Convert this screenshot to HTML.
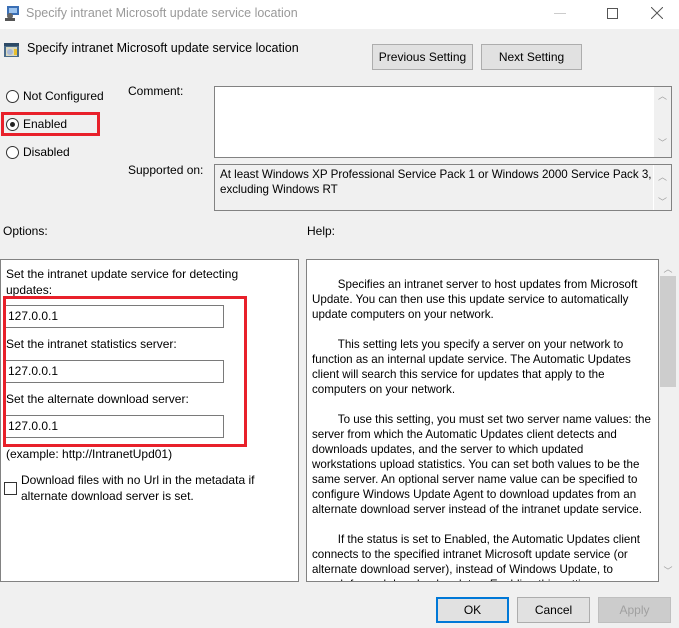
<!DOCTYPE html>
<html><head><style>
*{margin:0;padding:0;box-sizing:border-box}
body{width:679px;height:628px;background:#f0f0f0;font-family:"Liberation Sans",sans-serif;font-size:12px;color:#000;position:relative;overflow:hidden}
.a{position:absolute;white-space:nowrap}
.btn{position:absolute;background:#e1e1e1;border:1px solid #adadad;text-align:center;line-height:24px;font-size:12px}
.rad{position:absolute;width:13px;height:13px;border:1px solid #333;border-radius:50%;background:#fff}
.inp{position:absolute;background:#fff;border:1px solid #7a7a7a;height:23px;line-height:21px;padding-left:2px}
.sb{position:absolute;background:#f0f0f0;color:#a0a0a0;font-size:9px;text-align:center}
.help div{height:15px;line-height:15px;white-space:nowrap}
</style></head><body>
<div class="a" style="left:0;top:0;width:679px;height:29px;background:#fff"></div>
<svg class="a" style="left:4px;top:5px" width="17" height="17"><rect x="3" y="1" width="12" height="9" fill="#3b6fb5"/><rect x="5" y="3" width="8" height="5" fill="#9cc3ee"/><circle cx="6" cy="11" r="3" fill="#666"/><rect x="1" y="13" width="10" height="3" fill="#555"/></svg>
<div class="a" style="left:26px;top:6px;color:#999;font-size:12.5px">Specify intranet Microsoft update service location</div>
<div class="a" style="left:554px;top:13px;width:12px;height:1px;background:#ccc"></div>
<div class="a" style="left:607px;top:8px;width:11px;height:11px;border:1px solid #555"></div>
<svg class="a" style="left:651px;top:7px" width="12" height="12"><path d="M0 0L12 12M12 0L0 12" stroke="#555" stroke-width="1"/></svg>
<svg class="a" style="left:3px;top:41px" width="17" height="17"><rect x="1" y="2" width="15" height="14" fill="#4a6b8a"/><rect x="1" y="2" width="15" height="3" fill="#2d4a66"/><rect x="3" y="6" width="11" height="9" fill="#d8d8c0"/><circle cx="7" cy="11" r="3" fill="#a8b8d8"/><rect x="11" y="8" width="3" height="6" fill="#e8c030"/></svg>
<div class="a" style="left:27px;top:41px;font-size:12.5px">Specify intranet Microsoft update service location</div>
<div class="btn" style="left:372px;top:44px;width:101px;height:26px">Previous Setting</div>
<div class="btn" style="left:481px;top:44px;width:101px;height:26px">Next Setting</div>
<div class="rad" style="left:6px;top:90px"></div><div class="a" style="left:23px;top:89px">Not Configured</div>
<div class="rad" style="left:6px;top:118px"></div><div class="a" style="left:10px;top:122px;width:5px;height:5px;border-radius:50%;background:#222"></div><div class="a" style="left:23px;top:117px">Enabled</div>
<div class="rad" style="left:6px;top:146px"></div><div class="a" style="left:23px;top:145px">Disabled</div>
<div class="a" style="left:1px;top:112px;width:99px;height:24px;border:3px solid #e8202a"></div>
<div class="a" style="left:128px;top:84px">Comment:</div>
<div class="a" style="left:214px;top:86px;width:458px;height:72px;background:#fff;border:1px solid #828282"></div>
<div class="sb" style="left:654px;top:87px;width:17px;height:70px"><div style="margin-top:2px">︿</div><div style="margin-top:34px">﹀</div></div>
<div class="a" style="left:128px;top:163px">Supported on:</div>
<div class="a" style="left:214px;top:164px;width:458px;height:47px;border:1px solid #828282"></div>
<div class="a" style="left:220px;top:167px;line-height:15px;font-size:11.6px">At least Windows XP Professional Service Pack 1 or Windows 2000 Service Pack 3,<br>excluding Windows RT</div>
<div class="sb" style="left:653px;top:165px;width:18px;height:45px;border-left:1px solid #fff"><div style="margin-top:5px">︿</div><div style="margin-top:12px">﹀</div></div>
<div class="a" style="left:3px;top:224px">Options:</div>
<div class="a" style="left:307px;top:224px">Help:</div>
<div class="a" style="left:0;top:259px;width:299px;height:323px;background:#fff;border:1px solid #828282"></div>
<div class="a" style="left:6px;top:266px;line-height:16px">Set the intranet update service for detecting<br>updates:</div>
<div class="inp" style="left:5px;top:305px;width:219px">127.0.0.1</div>
<div class="a" style="left:6px;top:337px">Set the intranet statistics server:</div>
<div class="inp" style="left:5px;top:360px;width:219px">127.0.0.1</div>
<div class="a" style="left:6px;top:392px">Set the alternate download server:</div>
<div class="inp" style="left:5px;top:415px;width:219px">127.0.0.1</div>
<div class="a" style="left:3px;top:296px;width:244px;height:151px;border:3px solid #e8202a"></div>
<div class="a" style="left:6px;top:447px">(example: http://IntranetUpd01)</div>
<div class="a" style="left:4px;top:482px;width:13px;height:13px;border:1px solid #333;background:#fff"></div>
<div class="a" style="left:21px;top:472px;line-height:16px">Download files with no Url in the metadata if<br>alternate download server is set.</div>
<div class="a" style="left:306px;top:259px;width:353px;height:323px;background:#fff;border:1px solid #828282"></div>
<div class="sb" style="left:659px;top:259px;width:18px;height:323px"><div style="margin-top:3px">︿</div><div style="position:absolute;left:1px;top:17px;width:16px;height:111px;background:#cdcdcd"></div><div style="position:absolute;top:305px;width:18px">﹀</div></div>
<div class="a help" style="left:312px;top:277px;width:345px;height:304px;overflow:hidden;font-size:11.6px">
<div>&nbsp;&nbsp;&nbsp;&nbsp;&nbsp;&nbsp;&nbsp;&nbsp;Specifies an intranet server to host updates from Microsoft</div>
<div>Update. You can then use this update service to automatically</div>
<div>update computers on your network.</div><div></div>
<div>&nbsp;&nbsp;&nbsp;&nbsp;&nbsp;&nbsp;&nbsp;&nbsp;This setting lets you specify a server on your network to</div>
<div>function as an internal update service. The Automatic Updates</div>
<div>client will search this service for updates that apply to the</div>
<div>computers on your network.</div><div></div>
<div>&nbsp;&nbsp;&nbsp;&nbsp;&nbsp;&nbsp;&nbsp;&nbsp;To use this setting, you must set two server name values: the</div>
<div>server from which the Automatic Updates client detects and</div>
<div>downloads updates, and the server to which updated</div>
<div>workstations upload statistics. You can set both values to be the</div>
<div>same server. An optional server name value can be specified to</div>
<div>configure Windows Update Agent to download updates from an</div>
<div>alternate download server instead of the intranet update service.</div><div></div>
<div>&nbsp;&nbsp;&nbsp;&nbsp;&nbsp;&nbsp;&nbsp;&nbsp;If the status is set to Enabled, the Automatic Updates client</div>
<div>connects to the specified intranet Microsoft update service (or</div>
<div>alternate download server), instead of Windows Update, to</div>
<div>search for and download updates. Enabling this setting means</div>
</div>
<div class="btn" style="left:436px;top:597px;width:73px;height:26px;border:2px solid #0078d7;line-height:22px">OK</div>
<div class="btn" style="left:517px;top:597px;width:73px;height:26px">Cancel</div>
<div class="btn" style="left:598px;top:597px;width:73px;height:26px;background:#ccc;border-color:#bfbfbf;color:#a0a0a0">Apply</div>
</body></html>
